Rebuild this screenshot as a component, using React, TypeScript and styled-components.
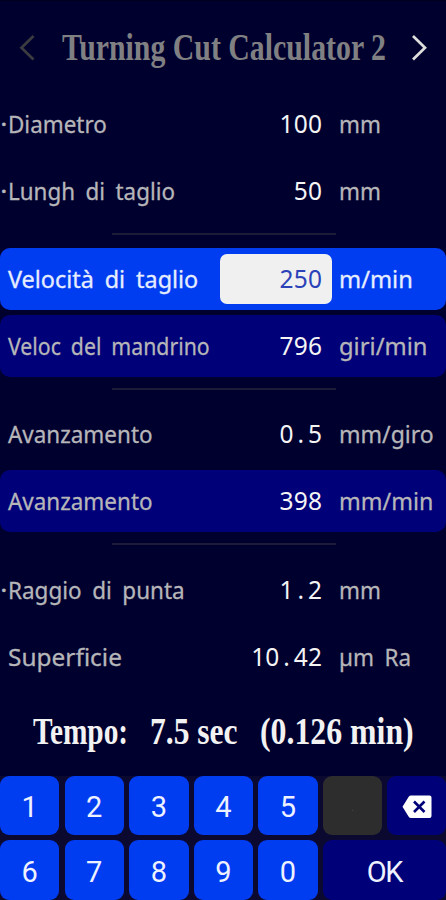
import React, { useLayoutEffect, useRef, useState } from "react";
import styled, { createGlobalStyle } from "styled-components";

const GlobalStyle = createGlobalStyle`
  * { box-sizing: border-box; }
  body { margin: 0; background: #00002f; overflow: hidden; }
`;

const Screen = styled.main`
  width: 446px;
  height: 900px;
  display: flex;
  flex-direction: column;
  background: #00002f;
  font-family: "Noto Sans", sans-serif;
  overflow: hidden;
`;

const Header = styled.header`
  height: 93.2px;
  flex: none;
  display: flex;
  align-items: center;
  padding: 2px 17px 0 18px;
  border-top: 1px solid #00001c;
`;

const NavButton = styled.button<{ $dim?: boolean }>`
  width: 20px;
  height: 30px;
  padding: 0;
  border: 0;
  background: none;
  color: ${(p) => (p.$dim ? "#3b3b40" : "#dededc")};
  svg { display: block; }
`;

const Title = styled.h1`
  flex: 1;
  margin: 0 0 0 24px;
  color: #808083;
  font: bold 37px/50px "Liberation Serif", serif;
`;

const FitBox = styled.span<{ $w: number }>`
  display: block;
  width: ${(p) => p.$w}px;
  white-space: pre;
`;

const FitInner = styled.span`
  display: inline-block;
  transform-origin: left center;
`;

/** Single line of text, condensed or widened to fill the given width. */
function Fit({ w, children }: { w: number; children: React.ReactNode }) {
  const ref = useRef<HTMLSpanElement>(null);
  const [scale, setScale] = useState(1);
  useLayoutEffect(() => {
    if (ref.current) setScale(w / ref.current.offsetWidth);
  }, [w]);
  return (
    <FitBox $w={w}>
      <FitInner ref={ref} style={{ transform: `scaleX(${scale})` }}>
        {children}
      </FitInner>
    </FitBox>
  );
}

type Tone = "plain" | "active" | "result";

const toneBackground: Record<Tone, string> = {
  plain: "transparent",
  active: "#003cf0",
  result: "#000078",
};

const Row = styled.div<{ $tone: Tone }>`
  height: 62px;
  flex: none;
  display: grid;
  grid-template-columns: 8px 212px 112px 1fr;
  align-items: center;
  border-radius: 10px;
  background: ${(p) => toneBackground[p.$tone]};
  color: ${(p) => (p.$tone === "active" ? "#e6edff" : "#b6b6b9")};
  font-size: 24px;
  line-height: 34px;
  word-spacing: 5px;
  -webkit-text-stroke: 0.3px currentColor;
`;

const Rows = styled.section`
  flex: none;
  display: flex;
  flex-direction: column;
  gap: 4.7px;
`;

const Mark = styled.span`
  padding-left: 1px;
  font-size: 20px;
  font-weight: 700;
`;

const Value = styled.span<{ $field: boolean }>`
  height: 50px;
  padding-right: 10px;
  display: flex;
  align-items: center;
  justify-content: flex-end;
  border-radius: 7px;
  background: ${(p) => (p.$field ? "#f0f0f0" : "transparent")};
  color: ${(p) => (p.$field ? "#2b42b8" : "#f4f4f4")};
  font-size: 24.5px;
  -webkit-text-stroke: 0;
`;

const Digit = styled.span`
  width: 14.2px;
  text-align: center;
`;

const Unit = styled.span`
  padding-left: 7px;
`;

const Divider = styled.hr`
  width: 224px;
  height: 2px;
  flex: none;
  margin: 0 0 0 112px;
  border: 0;
  background: #1c1c38;
`;

const Group = styled.div<{ $before: number }>`
  padding-top: ${(p) => p.$before}px;
  flex: none;
`;

const Total = styled.div`
  height: 88px;
  flex: none;
  display: flex;
  align-items: center;
  padding: 0 0 2px 33px;
  color: #f2f2f2;
  font: bold 38px/50px "Liberation Serif", serif;
`;

const Gap = styled.span<{ $w: number }>`
  width: ${(p) => p.$w}px;
`;

const Keypad = styled.section`
  flex: 1;
  display: grid;
  grid-template-columns: repeat(6, 59.4px) 1fr;
  grid-template-rows: 59.5px 59.5px;
  gap: 5.2px;
  background: #0b0930;
`;

const Key = styled.button<{ $kind?: "digit" | "off" | "action"; $wide?: boolean }>`
  grid-column: span ${(p) => (p.$wide ? 2 : 1)};
  display: flex;
  align-items: center;
  justify-content: center;
  padding: 3px 0 0;
  border: 0;
  border-radius: 9px;
  background: ${(p) =>
    p.$kind === "off" ? "#2d2d2d" : p.$kind === "action" ? "#000078" : "#003cf0"};
  color: ${(p) => (p.$kind === "off" ? "#454545" : "#eef1ff")};
  font: ${(p) => (p.$kind === "off" ? "12px" : "29px")} Roboto, sans-serif;
  letter-spacing: ${(p) => (p.$wide ? "-1.5px" : "0")};
`;

interface Field {
  label: string;
  labelW: number;
  value: string;
  unit: string;
  unitW: number;
  tone?: Tone;
  mark?: boolean;
}

const groups: Field[][] = [
  [
    { label: "Diametro", labelW: 99, value: "100", unit: "mm", unitW: 42, mark: true },
    { label: "Lungh di taglio", labelW: 167, value: "50", unit: "mm", unitW: 42, mark: true },
  ],
  [
    { label: "Velocità di taglio", labelW: 190, value: "250", unit: "m/min", unitW: 74, tone: "active" },
    { label: "Veloc del mandrino", labelW: 202, value: "796", unit: "giri/min", unitW: 88, tone: "result" },
  ],
  [
    { label: "Avanzamento", labelW: 145, value: "0.5", unit: "mm/giro", unitW: 95 },
    { label: "Avanzamento", labelW: 145, value: "398", unit: "mm/min", unitW: 94, tone: "result" },
  ],
  [
    { label: "Raggio di punta", labelW: 177, value: "1.2", unit: "mm", unitW: 42, mark: true },
    { label: "Superficie", labelW: 114, value: "10.42", unit: "µm Ra", unitW: 72 },
  ],
];

function FieldRow({ f }: { f: Field }) {
  const tone = f.tone ?? "plain";
  return (
    <Row $tone={tone}>
      <Mark>{f.mark ? "·" : ""}</Mark>
      <Fit w={f.labelW}>{f.label}</Fit>
      <Value $field={tone === "active"}>
        {f.value.split("").map((c, i) => (
          <Digit key={i}>{c}</Digit>
        ))}
      </Value>
      <Unit>
        <Fit w={f.unitW}>{f.unit}</Fit>
      </Unit>
    </Row>
  );
}

function Chevron({ d }: { d: string }) {
  return (
    <svg width="20" height="30" viewBox="0 0 20 30" fill="none" stroke="currentColor" strokeWidth="2.7">
      <path d={d} />
    </svg>
  );
}

export default function App() {
  return (
    <Screen>
      <GlobalStyle />
      <Header>
        <NavButton $dim aria-label="Precedente">
          <Chevron d="M15.5 3 3.500 14.700 15.500 26.500" />
        </NavButton>
        <Title>
          <Fit w={324}>Turning Cut Calculator 2</Fit>
        </Title>
        <NavButton aria-label="Successivo">
          <Chevron d="M4 3 16 14.700 4 26.500" />
        </NavButton>
      </Header>
      {groups.map((fields, i) => (
        <Group key={i} $before={i === 0 ? 0 : 11.3}>
          {i > 0 && <Divider />}
          <Group $before={i === 0 ? 0 : i === 1 ? 12.7 : 13.6}>
            <Rows>
              {fields.map((f, j) => (
                <FieldRow key={j} f={f} />
              ))}
            </Rows>
          </Group>
        </Group>
      ))}
      <Total>
        <Fit w={95}>Tempo:</Fit>
        <Gap $w={22} />
        <Fit w={88}>7.5 sec</Fit>
        <Gap $w={22} />
        <Fit w={154}>(0.126 min)</Fit>
      </Total>
      <Keypad>
        {["1", "2", "3", "4", "5"].map((k) => (
          <Key key={k}>{k}</Key>
        ))}
        <Key $kind="off">.</Key>
        <Key $kind="action" aria-label="Cancella">
          <svg width="30" height="24" viewBox="0 0 30 24">
            <path d="M9 0.5H27.5Q29.5 .5 29.5 2.5V21Q29.5 23 27.5 23H9Q7.500 23 6.700 21.700L0.500 11.750 6.700 1.800Q7.500.5 9 .5Z" fill="#fff" />
            <path d="M12 6.500 22.500 17M22.500 6.500 12 17" stroke="#000078" strokeWidth="2.600" />
          </svg>
        </Key>
        {["6", "7", "8", "9", "0"].map((k) => (
          <Key key={k}>{k}</Key>
        ))}
        <Key $kind="action" $wide>OK</Key>
      </Keypad>
    </Screen>
  );
}
